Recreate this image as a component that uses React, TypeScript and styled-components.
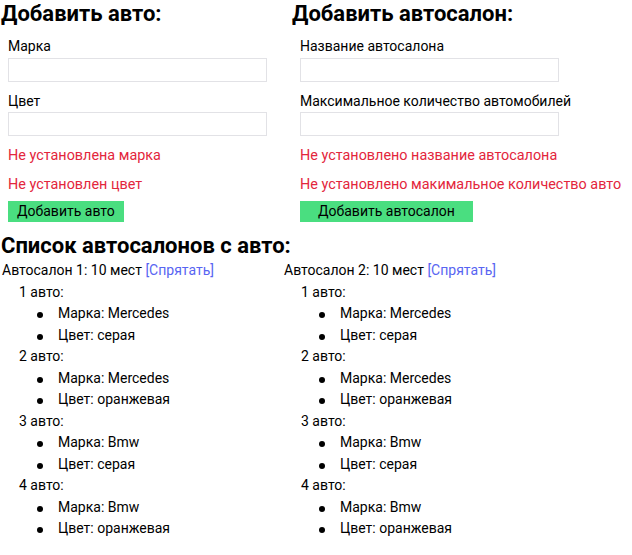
import React from "react";
import styled, { createGlobalStyle } from "styled-components";

const Global = createGlobalStyle`
  html, body { margin: 0; padding: 0; background: #fff; }
  body {
    font-family: Roboto, "Noto Sans", sans-serif;
    font-size: 14px;
    line-height: 21.5px;
    color: #000;
  }
  * { box-sizing: border-box; }
`;

const Page = styled.div`
  padding: 2px 0 0 1px;
  width: 632px;
`;

const FormsRow = styled.div`
  display: grid;
  grid-template-columns: 291px 1fr;
`;

const FormColumn = styled.section<{ $inset: number }>`
  display: flex;
  flex-direction: column;
  align-items: flex-start;
  & > *:not(h2) { margin-left: ${(p) => p.$inset}px; }
`;

const Heading = styled.h2`
  margin: 0;
  font-size: 22px;
  line-height: 24px;
  font-weight: 700;
`;

const FormHeading = styled(Heading)`
  margin-bottom: 10px;
`;

const Field = styled.label`
  display: flex;
  flex-direction: column;
  margin-bottom: 9px;
`;

const LabelText = styled.span`
  display: block;
`;

const Input = styled.input`
  width: 259px;
  height: 24px;
  border: 1px solid #e2e2e6;
  border-radius: 0;
  padding: 0 4px;
  font: inherit;
  outline: none;
`;

const ErrorText = styled.div`
  color: #e3263c;
  font-size: 14.4px;
  white-space: nowrap;
  margin-bottom: 7px;
`;

const Button = styled.button<{ $padX: number }>`
  height: 21px;
  line-height: 21px;
  margin-top: -1px;
  padding: 0 ${(p) => p.$padX}px;
  border: none;
  border-radius: 0;
  background: #4ade80;
  color: #000;
  font: inherit;
  cursor: pointer;
`;

const ListHeading = styled(Heading)`
  margin-top: 12px;
  margin-bottom: 2px;
`;

const SalonsRow = styled.div`
  display: grid;
  grid-template-columns: 282px 1fr;
  padding-left: 1px;
`;

const Salon = styled.div``;

const SalonTitle = styled.div``;

const HideLink = styled.a`
  color: #5865f2;
  text-decoration: none;
  cursor: pointer;
`;

const Cars = styled.div`
  padding-left: 17px;
`;

const CarTitle = styled.div``;

const Props = styled.ul`
  margin: 0;
  padding-left: 39px;
  list-style: none;
`;

const PropItem = styled.li`
  position: relative;
  &::before {
    content: "";
    position: absolute;
    left: -21px;
    top: 9px;
    width: 6px;
    height: 6px;
    border-radius: 50%;
    background: #000;
  }
`;

type Car = { brand: string; color: string };

const cars: Car[] = [
  { brand: "Mercedes", color: "серая" },
  { brand: "Mercedes", color: "оранжевая" },
  { brand: "Bmw", color: "серая" },
  { brand: "Bmw", color: "оранжевая" },
];

const salons = [
  { id: 1, places: 10, cars },
  { id: 2, places: 10, cars },
];

export default function App() {
  return (
    <Page>
      <Global />
      <FormsRow>
        <FormColumn $inset={7}>
          <FormHeading>Добавить авто:</FormHeading>
          <Field>
            <LabelText>Марка</LabelText>
            <Input />
          </Field>
          <Field>
            <LabelText>Цвет</LabelText>
            <Input />
          </Field>
          <ErrorText>Не установлена марка</ErrorText>
          <ErrorText>Не установлен цвет</ErrorText>
          <Button $padX={9}>Добавить авто</Button>
        </FormColumn>
        <FormColumn $inset={8}>
          <FormHeading>Добавить автосалон:</FormHeading>
          <Field>
            <LabelText>Название автосалона</LabelText>
            <Input />
          </Field>
          <Field>
            <LabelText>Максимальное количество автомобилей</LabelText>
            <Input />
          </Field>
          <ErrorText>Не установлено название автосалона</ErrorText>
          <ErrorText>Не установлено макимальное количество авто</ErrorText>
          <Button $padX={18}>Добавить автосалон</Button>
        </FormColumn>
      </FormsRow>
      <ListHeading>Список автосалонов с авто:</ListHeading>
      <SalonsRow>
        {salons.map((s) => (
          <Salon key={s.id}>
            <SalonTitle>
              Автосалон {s.id}: {s.places} мест <HideLink>[Спрятать]</HideLink>
            </SalonTitle>
            <Cars>
              {s.cars.map((c, i) => (
                <div key={i}>
                  <CarTitle>{i + 1} авто:</CarTitle>
                  <Props>
                    <PropItem>Марка: {c.brand}</PropItem>
                    <PropItem>Цвет: {c.color}</PropItem>
                  </Props>
                </div>
              ))}
            </Cars>
          </Salon>
        ))}
      </SalonsRow>
    </Page>
  );
}
